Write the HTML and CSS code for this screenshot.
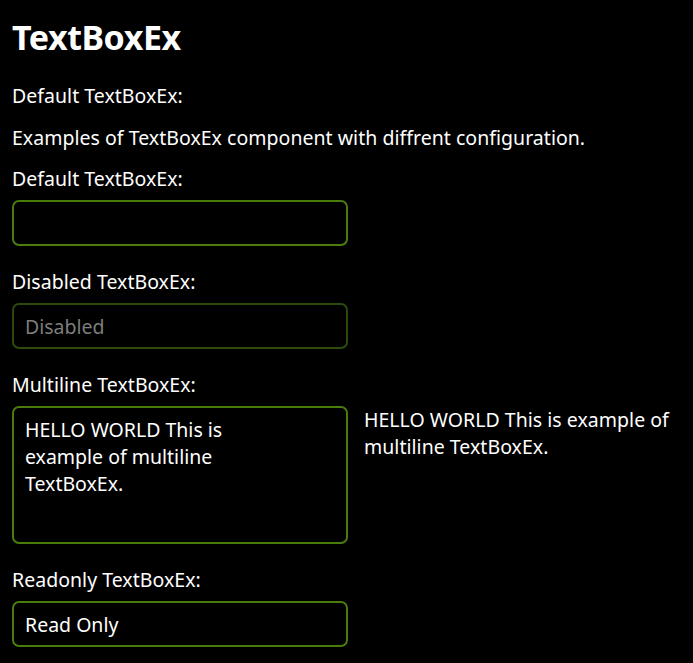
FILE: index.html
```html
<!DOCTYPE html>
<html lang="en">
<head>
<meta charset="utf-8">
<title>TextBoxEx</title>
<link rel="stylesheet" href="styles.css">
</head>
<body>
<main class="page">
  <h1 class="title">TextBoxEx</h1>
  <p class="text intro">Default TextBoxEx:</p>
  <p class="text desc">Examples of TextBoxEx component with diffrent configuration.</p>

  <div class="field">
    <label class="text label" for="tb1">Default TextBoxEx:</label>
    <input class="box" id="tb1" type="text" value="">
  </div>

  <div class="field">
    <label class="text label" for="tb2">Disabled TextBoxEx:</label>
    <input class="box box-disabled" id="tb2" type="text" placeholder="Disabled" disabled>
  </div>

  <div class="field">
    <label class="text label" for="tb3">Multiline TextBoxEx:</label>
    <div class="multi-row">
      <textarea class="box box-multi" id="tb3" readonly>HELLO WORLD This is
example of multiline
TextBoxEx.</textarea>
      <p class="text echo">HELLO WORLD This is example of<br>multiline TextBoxEx.</p>
    </div>
  </div>

  <div class="field">
    <label class="text label" for="tb4">Readonly TextBoxEx:</label>
    <input class="box" id="tb4" type="text" value="Read Only" readonly>
  </div>
</main>
</body>
</html>
```

FILE: styles.css
```css
html, body {
  margin: 0;
  padding: 0;
  background: #000;
  color: #fff;
}

body {
  font-family: "Noto Sans", "Open Sans", sans-serif;
}

.page {
  padding: 12px 12px 0 12px;
  display: flex;
  flex-direction: column;
}

.title {
  margin: 0;
  font-size: 34px;
  font-weight: 700;
  line-height: 50px;
  letter-spacing: -0.45px;
}

.text {
  font-size: 19.5px;
  line-height: 28px;
  letter-spacing: 0.03px;
  margin: 0;
  color: #fff;
}

.intro {
  margin-top: 20px;
}

.desc {
  margin-top: 14px;
}

.field {
  display: flex;
  flex-direction: column;
  align-items: flex-start;
  margin-top: 22px;
}

.desc + .field {
  margin-top: 13px;
}

.label {
  display: block;
  height: 28px;
}

.field .box {
  margin-top: 7px;
}

.multi-row {
  display: flex;
  align-items: flex-start;
  gap: 16px;
  margin-top: 7px;
}

.field .multi-row .box {
  margin-top: 0;
}

.box {
  box-sizing: border-box;
  width: 336px;
  height: 46px;
  border: 2px solid #4a7c0c;
  border-radius: 7px;
  background: #000;
  color: #fff;
  font-family: "Noto Sans", "Open Sans", sans-serif;
  font-size: 19.5px;
  padding: 0 11px;
  outline: none;
  margin: 0;
}

.box-disabled {
  border-color: #2c4a0c;
}

.box-disabled::placeholder {
  color: #7d7d7d;
  opacity: 1;
}

.box-multi {
  height: 138px;
  padding: 8px 11px;
  line-height: 27px;
  resize: none;
  overflow: hidden;
  display: block;
}

.echo {
  line-height: 27px;
}
```
